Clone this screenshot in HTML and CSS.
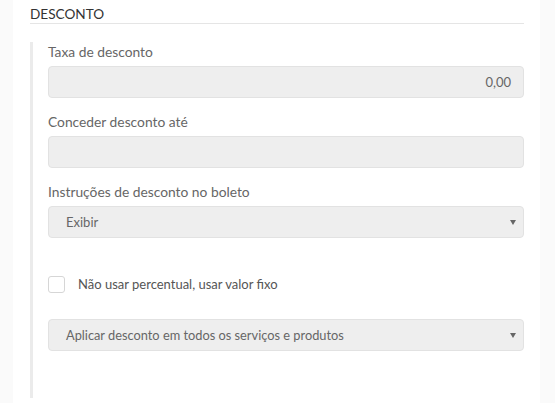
FILE: index.html
```html
<!DOCTYPE html>
<html lang="pt-BR">
<head>
<meta charset="utf-8">
<link rel="stylesheet" href="styles.css">
</head>
<body>
<div class="panel">
  <h2 class="title">DESCONTO</h2>
  <div class="section">
    <div class="field">
      <label class="label">Taxa de desconto</label>
      <div class="input input-right">0,00</div>
    </div>
    <div class="field">
      <label class="label">Conceder desconto até</label>
      <div class="input"></div>
    </div>
    <div class="field">
      <label class="label">Instruções de desconto no boleto</label>
      <div class="input select"><span>Exibir</span><i class="caret"></i></div>
    </div>
    <div class="check-row">
      <span class="checkbox"></span>
      <span class="check-text">Não usar percentual, usar valor fixo</span>
    </div>
    <div class="input select"><span class="select-text">Aplicar desconto em todos os serviços e produtos</span><i class="caret"></i></div>
  </div>
</div>
</body>
</html>
```
FILE: styles.css
```css
html, body {
  margin: 0;
  padding: 0;
  background: #fafafa;
  height: 403px;
  overflow: hidden;
}
body {
  font-family: Lato, "Open Sans", sans-serif;
}
.panel {
  margin-left: 13px;
  width: 527px;
  height: 403px;
  background: #fff;
  padding: 0 16px 0 17px;
  box-sizing: border-box;
}
.title {
  margin: 0;
  padding-top: 5px;
  font-size: 13.6px;
  font-weight: 400;
  line-height: 18px;
  color: #333;
  border-bottom: 1px solid #e5e5e5;
}
.section {
  margin-top: 18px;
  border-left: 3px solid #ebebeb;
  padding: 0 0 0 15px;
  height: 356px;
  box-sizing: border-box;
}
.field {
  margin-bottom: 14px;
}
.label {
  display: block;
  font-size: 13.8px;
  line-height: 18px;
  color: #666;
  margin-bottom: 6px;
  position: relative;
  top: 1px;
}
.input {
  height: 32px;
  box-sizing: border-box;
  background: #eeeeee;
  border: 1px solid #e2e2e2;
  border-radius: 4px;
  font-size: 13px;
  line-height: 30px;
  color: #666;
  padding: 0 12px 0 17px;
}
.input-right {
  text-align: right;
}
.select {
  display: flex;
  align-items: center;
  justify-content: space-between;
  padding-right: 6px;
}
.select-text {
  font-size: 12.8px;
}
.caret {
  width: 0;
  height: 0;
  border-left: 3px solid transparent;
  border-right: 3px solid transparent;
  border-top: 5px solid #666;
  margin-right: 1px;
  margin-top: 1px;
}
.check-row {
  display: flex;
  align-items: center;
  margin-top: 37px;
  margin-bottom: 26px;
  height: 18px;
}
.checkbox {
  width: 17px;
  height: 17px;
  box-sizing: border-box;
  border: 1px solid #d6d6d6;
  border-radius: 3px;
  background: #fff;
  margin-right: 13px;
}
.check-text {
  font-size: 13px;
  color: #555;
  line-height: 18px;
}
```
